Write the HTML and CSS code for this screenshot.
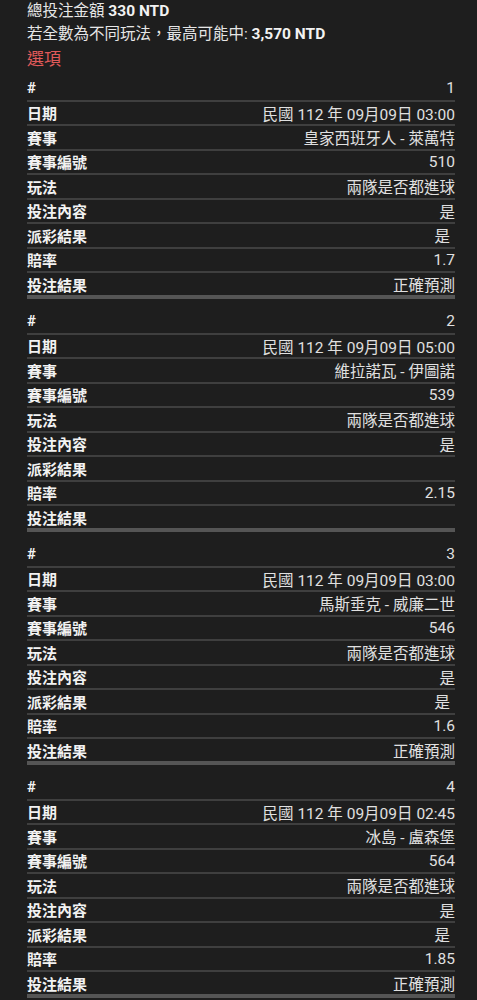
FILE: index.html
```html
<!DOCTYPE html>
<html lang="zh-Hant">
<head>
    <meta charset="UTF-8">
    <meta name="viewport" content="width=device-width, initial-scale=1.0">
    <title>投注明細</title>
    <link rel="stylesheet" href="styles.css">
</head>
<body>
    <div class="summary">
        <p>總投注金額 <b>330 NTD</b></p>
        <p>若全數為不同玩法，最高可能中: <b>3,570 NTD</b></p>
    </div>
    <h2 class="options-title">選項</h2>

    <div class="bet">
        <div class="row"><span class="label">#</span><span class="value">1</span></div>
        <div class="row"><span class="label">日期</span><span class="value">民國 112 年 09月09日 03:00</span></div>
        <div class="row"><span class="label">賽事</span><span class="value">皇家西班牙人 - 萊萬特</span></div>
        <div class="row"><span class="label">賽事編號</span><span class="value">510</span></div>
        <div class="row"><span class="label">玩法</span><span class="value">兩隊是否都進球</span></div>
        <div class="row"><span class="label">投注內容</span><span class="value">是</span></div>
        <div class="row"><span class="label">派彩結果</span><span class="value pad">是</span></div>
        <div class="row"><span class="label">賠率</span><span class="value">1.7</span></div>
        <div class="row"><span class="label">投注結果</span><span class="value">正確預測</span></div>
    </div>

    <div class="bet">
        <div class="row"><span class="label">#</span><span class="value">2</span></div>
        <div class="row"><span class="label">日期</span><span class="value">民國 112 年 09月09日 05:00</span></div>
        <div class="row"><span class="label">賽事</span><span class="value">維拉諾瓦 - 伊圖諾</span></div>
        <div class="row"><span class="label">賽事編號</span><span class="value">539</span></div>
        <div class="row"><span class="label">玩法</span><span class="value">兩隊是否都進球</span></div>
        <div class="row"><span class="label">投注內容</span><span class="value">是</span></div>
        <div class="row"><span class="label">派彩結果</span><span class="value"></span></div>
        <div class="row"><span class="label">賠率</span><span class="value">2.15</span></div>
        <div class="row"><span class="label">投注結果</span><span class="value"></span></div>
    </div>

    <div class="bet">
        <div class="row"><span class="label">#</span><span class="value">3</span></div>
        <div class="row"><span class="label">日期</span><span class="value">民國 112 年 09月09日 03:00</span></div>
        <div class="row"><span class="label">賽事</span><span class="value">馬斯垂克 - 威廉二世</span></div>
        <div class="row"><span class="label">賽事編號</span><span class="value">546</span></div>
        <div class="row"><span class="label">玩法</span><span class="value">兩隊是否都進球</span></div>
        <div class="row"><span class="label">投注內容</span><span class="value">是</span></div>
        <div class="row"><span class="label">派彩結果</span><span class="value pad">是</span></div>
        <div class="row"><span class="label">賠率</span><span class="value">1.6</span></div>
        <div class="row"><span class="label">投注結果</span><span class="value">正確預測</span></div>
    </div>

    <div class="bet">
        <div class="row"><span class="label">#</span><span class="value">4</span></div>
        <div class="row"><span class="label">日期</span><span class="value">民國 112 年 09月09日 02:45</span></div>
        <div class="row"><span class="label">賽事</span><span class="value">冰島 - 盧森堡</span></div>
        <div class="row"><span class="label">賽事編號</span><span class="value">564</span></div>
        <div class="row"><span class="label">玩法</span><span class="value">兩隊是否都進球</span></div>
        <div class="row"><span class="label">投注內容</span><span class="value">是</span></div>
        <div class="row"><span class="label">派彩結果</span><span class="value pad">是</span></div>
        <div class="row"><span class="label">賠率</span><span class="value">1.85</span></div>
        <div class="row"><span class="label">投注結果</span><span class="value">正確預測</span></div>
    </div>
</body>
</html>
```

FILE: styles.css
```css
* {
    margin: 0;
    padding: 0;
    box-sizing: border-box;
}
body {
    font-family: Roboto, "Noto Sans CJK TC", sans-serif;
    background-color: #1e1e1e;
    color: #e6e6e6;
    font-size: 15.5px;
    padding: 0 22px 0 27px;
}
.summary p {
    line-height: 23px;
}
.summary b {
    font-weight: 700;
    color: #f2f2f2;
}
.options-title {
    font-size: 17px;
    font-weight: 400;
    line-height: 26px;
    color: #e05a5a;
    margin-bottom: 5px;
}
.bet {
    margin-bottom: 11px;
}
.row {
    display: flex;
    justify-content: space-between;
    align-items: center;
    height: 24.5px;
    border-bottom: 2px solid #3f3f3f;
}
.row:last-child {
    height: 26px;
    border-bottom: 4px solid #555555;
}
.label {
    font-size: 15px;
    font-weight: 700;
    color: #f2f2f2;
}
.value {
    color: #e0e0e0;
}
.value.pad {
    padding-right: 5px;
}
```
